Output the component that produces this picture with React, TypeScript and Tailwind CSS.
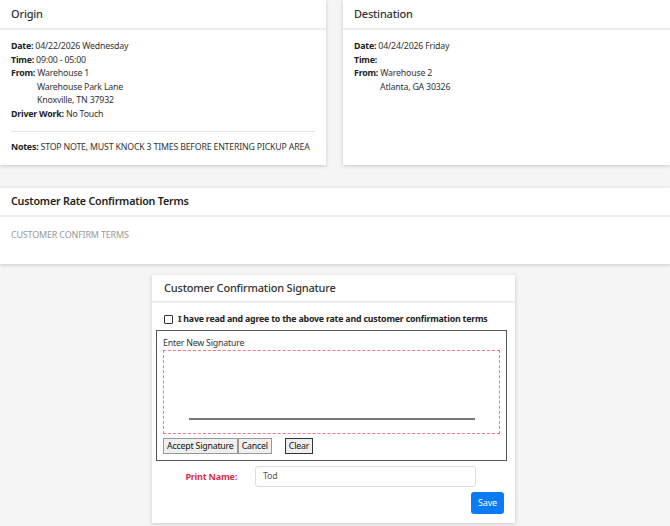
import React from 'react';

const font = { fontFamily: '"Noto Sans", "Open Sans", Arial, sans-serif' };

function Field({ label, value }: { label: string; value?: string }) {
  return (
    <div className="h-[13.5px] leading-[13.5px]">
      <span className="font-bold text-[#222]">{label}</span>
      {value ? <span className="text-[#333]"> {value}</span> : null}
    </div>
  );
}

function Indented({ children }: { children: React.ReactNode }) {
  return <div className="h-[13.5px] leading-[13.5px] pl-[26px] text-[#333]">{children}</div>;
}

function CardHeader({ title }: { title: string }) {
  return (
    <div className="h-[30px] flex items-center px-[11px] border-b-2 border-[#ececec] text-[11px] font-medium text-[#333]">
      {title}
    </div>
  );
}

export default function App() {
  return (
    <div className="w-[670px] h-[526px] overflow-hidden bg-[#f5f5f5] tracking-[-0.2px]" style={font}>
      <div className="grid grid-cols-[326px_327px] gap-[17px]">
        <div className="bg-white h-[165px] shadow-[0_1px_4px_rgba(0,0,0,0.18)]">
          <CardHeader title="Origin" />
          <div className="px-[11px] pt-[10px] text-[8.8px]">
            <Field label="Date:" value="04/22/2026 Wednesday" />
            <Field label="Time:" value="09:00 - 05:00" />
            <Field label="From:" value="Warehouse 1" />
            <Indented>Warehouse Park Lane</Indented>
            <Indented>Knoxville, TN 37932</Indented>
            <Field label="Driver Work:" value="No Touch" />
            <div className="mt-[10px] border-t border-[#e4e4e4]" />
            <div className="mt-[9px]">
              <Field label="Notes:" value="STOP NOTE, MUST KNOCK 3 TIMES BEFORE ENTERING PICKUP AREA" />
            </div>
          </div>
        </div>
        <div className="bg-white h-[165px] shadow-[0_1px_4px_rgba(0,0,0,0.18)]">
          <CardHeader title="Destination" />
          <div className="px-[11px] pt-[10px] text-[8.8px]">
            <Field label="Date:" value="04/24/2026 Friday" />
            <Field label="Time:" />
            <Field label="From:" value="Warehouse 2" />
            <Indented>Atlanta, GA 30326</Indented>
          </div>
        </div>
      </div>

      <div className="mt-[23px] bg-white h-[76px] shadow-[0_1px_4px_rgba(0,0,0,0.18)]">
        <div className="h-[29px] flex items-center px-[11px] border-b-2 border-[#ececec] text-[10.7px] font-semibold text-[#222]">
          Customer Rate Confirmation Terms
        </div>
        <div className="px-[11px] pt-[11px] text-[9px] text-[#999]">CUSTOMER CONFIRM TERMS</div>
      </div>

      <div className="mt-[11px] ml-[152px] w-[363px] h-[248px] bg-white shadow-[0_1px_4px_rgba(0,0,0,0.18)]">
        <div className="h-[28px] flex items-center px-[12px] border-b-2 border-[#ececec] text-[11px] font-medium text-[#333]">
          Customer Confirmation Signature
        </div>
        <div className="h-[27px] flex items-center gap-[5px] px-[12px] pt-[9px] pb-[3px] text-[8.8px] font-bold text-[#222]">
          <span className="w-[9px] h-[9px] border border-[#333] rounded-[1px] bg-white" />
          I have read and agree to the above rate and customer confirmation terms
        </div>
        <div className="mx-[4px] w-[351px] h-[131px] border-[1.5px] border-[#555] px-[6px] pt-[7px]">
          <div className="text-[8.8px] leading-[11px] text-[#333]">Enter New Signature</div>
          <div className="mt-[1px] h-[84px] border border-dashed border-[#f07a7a] flex items-end justify-center pb-[13px]">
            <div className="w-[286px] h-[2px] bg-[#777]" />
          </div>
          <div className="mt-[4px] flex items-center text-[8.8px] text-[#111]">
            <button className="h-[16px] px-[3px] border border-[#999] bg-[#efefef] leading-none">Accept Signature</button>
            <button className="h-[16px] px-[3px] border border-[#999] bg-[#efefef] leading-none">Cancel</button>
            <button className="ml-[13px] h-[16px] px-[3px] border border-[#333] bg-[#efefef] leading-none">Clear</button>
          </div>
        </div>
        <div className="mt-[5px] flex items-center">
          <div className="w-[85px] text-right text-[9px] font-bold text-[#d9304a]">Print Name:</div>
          <div className="ml-[18px] w-[221px] h-[21px] border border-[#ddd] rounded-[3px] flex items-center px-[7px] text-[8.8px] text-[#555]">
            Tod
          </div>
        </div>
        <div className="mt-[5px] flex justify-end pr-[11px]">
          <button className="w-[33px] h-[22px] rounded-[3px] bg-[#0a7bf5] text-white text-[9px]">Save</button>
        </div>
      </div>
    </div>
  );
}
